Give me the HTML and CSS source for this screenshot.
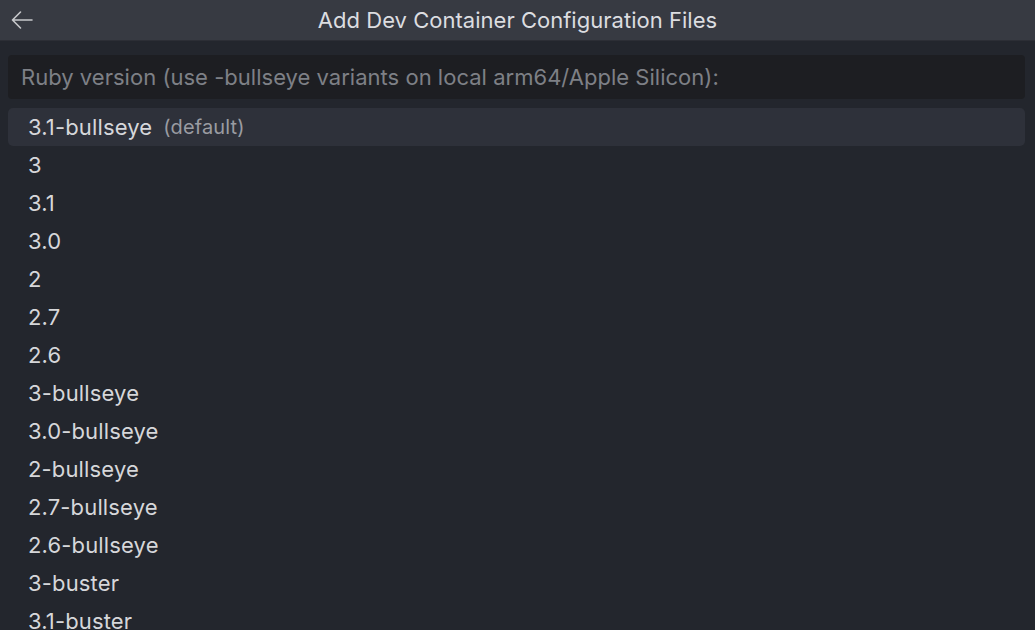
FILE: index.html
```html
<!DOCTYPE html>
<html>
<head>
<meta charset="utf-8">
<link rel="stylesheet" href="styles.css">
</head>
<body>
<div class="panel">
  <div class="titlebar">
    <button class="back" aria-label="Back">
      <svg width="24" height="20" viewBox="0 0 24 20"><path d="M22 10H2.5M10.5 2L2.5 10l8 8" fill="none" stroke="#c8c9cc" stroke-width="1.6" stroke-linecap="round" stroke-linejoin="round"/></svg>
    </button>
    <div class="title">Add Dev Container Configuration Files</div>
  </div>
  <div class="content">
    <div class="input">Ruby version (use -bullseye variants on local arm64/Apple Silicon):</div>
    <ul class="list">
      <li class="item selected">3.1-bullseye<span class="desc">(default)</span></li>
      <li class="item">3</li>
      <li class="item">3.1</li>
      <li class="item">3.0</li>
      <li class="item">2</li>
      <li class="item">2.7</li>
      <li class="item">2.6</li>
      <li class="item">3-bullseye</li>
      <li class="item">3.0-bullseye</li>
      <li class="item">2-bullseye</li>
      <li class="item">2.7-bullseye</li>
      <li class="item">2.6-bullseye</li>
      <li class="item">3-buster</li>
      <li class="item">3.1-buster</li>
    </ul>
  </div>
</div>
</body>
</html>
```
FILE: styles.css
```css
html, body {
  margin: 0;
  padding: 0;
  background: #23262d;
  overflow: hidden;
}
body {
  font-family: Inter, "Noto Sans", sans-serif;
  color: #d6d7da;
  font-size: 22px;
  letter-spacing: 0.02px;
}
.panel {
  width: 1035px;
  height: 630px;
  display: flex;
  flex-direction: column;
  overflow: hidden;
}
.titlebar {
  flex-shrink: 0;
  height: 40px;
  background: #373a42;
  border-bottom: 1px solid #2c2e35;
  display: flex;
  align-items: center;
}
.back {
  background: none;
  border: 0;
  padding: 0;
  margin-left: 10px;
  width: 24px;
  height: 20px;
  display: flex;
}
.title {
  flex: 1;
  text-align: center;
  margin-right: 34px;
  color: #dcdde0;
}
.content {
  flex-shrink: 0;
  padding: 14px 10px 0 8px;
}
.input {
  height: 44px;
  background: #1d1e22;
  border-radius: 4px;
  display: flex;
  align-items: center;
  padding-left: 13px;
  color: #7e8086;
}
.list {
  list-style: none;
  margin: 9px 0 0 0;
  padding: 0;
}
.item {
  height: 38px;
  display: flex;
  align-items: center;
  padding-left: 20px;
  border-radius: 5px;
  letter-spacing: 0.15px;
}
.item.selected {
  background: #2e313a;
}
.desc {
  margin-left: 11px;
  font-size: 20px;
  color: #9a9ca2;
}
```
